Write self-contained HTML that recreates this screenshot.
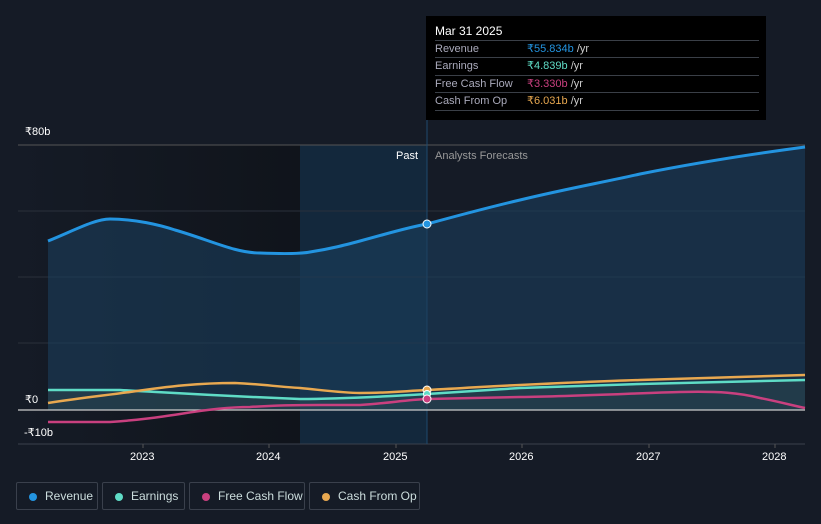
<!DOCTYPE html>
<html><head><meta charset="utf-8"><style>
body{margin:0;width:821px;height:524px;background:#151b26;font-family:"Liberation Sans",sans-serif;overflow:hidden;position:relative}
.tt{position:absolute;left:426px;top:16px;width:340px;height:104px;background:#000;color:#fff;font-size:11px}
.tt .h{position:absolute;left:9px;top:8px;font-size:12px}
.tt .r{position:absolute;left:9px;width:324px;border-top:1px solid #3a3f47;height:17px;line-height:17px;color:#aab}
.tt .r span{position:absolute;left:92px}
.tt .r i{font-style:normal;color:#ccc}
.lg{position:absolute;top:482px;height:28px;border:1px solid #3a404c;border-radius:2px;color:#cdd;font-size:12px;line-height:28px;box-sizing:border-box}
.lg b{position:absolute;left:12px;top:10px;width:8px;height:8px;border-radius:50%}
.lg span{position:absolute;left:28px;top:-1px}
.ax{position:absolute;color:#fff;font-size:11px}
</style></head><body>
<svg width="821" height="524" style="position:absolute;left:0;top:0">
<defs><linearGradient id="pf" x1="0" x2="1"><stop offset="0" stop-color="#151b26"/><stop offset="1" stop-color="#10141b"/></linearGradient></defs>
<rect x="18" y="145" width="282" height="299" fill="url(#pf)"/>
<rect x="300" y="145" width="127" height="299" fill="#13283c"/>
<g stroke="#2a303b" stroke-width="1"><line x1="18" y1="145" x2="805" y2="145" stroke="#555"/><line x1="18" y1="211" x2="805" y2="211"/><line x1="18" y1="277" x2="805" y2="277"/><line x1="18" y1="343" x2="805" y2="343"/><line x1="18" y1="444" x2="805" y2="444" stroke="#3a404c"/></g>
<line x1="427" y1="120" x2="427" y2="444" stroke="#1e4a6e" stroke-width="1"/>
<path d="M48,241 C75,230 95,219 110,219 C135,219 160,225 175,230 C210,240 235,253 260,253 C285,254 300,254 310,252 C330,249 345,245 360,241 C390,233 405,228 427,224 C460,215 490,207 520,200 C570,188 600,183 640,174 C700,162 760,153 805,147 L805,410 L48,410Z" fill="#1b3d5c" opacity="0.6"/>
<path d="M48,390 L120,390 C160,392 200,395 300,399 C330,399 360,398 427,394 C470,391 490,390 520,388 L640,384 L805,380 L805,410 L48,410Z" fill="#3a5a55" opacity="0.3"/>
<path d="M48,241 C75,230 95,219 110,219 C135,219 160,225 175,230 C210,240 235,253 260,253 C285,254 300,254 310,252 C330,249 345,245 360,241 C390,233 405,228 427,224 C460,215 490,207 520,200 C570,188 600,183 640,174 C700,162 760,153 805,147" fill="none" stroke="#2394e0" stroke-width="3"/>
<line x1="18" y1="410" x2="805" y2="410" stroke="#ccc" stroke-width="1.2"/>
<path d="M48,422 L110,422 C140,420 160,417 180,414 C210,409 230,407 250,407 C280,405 300,405 320,405 L360,405 C390,403 405,400 427,399 L520,397 C580,396 640,393 680,392 C720,391 740,393 760,398 C780,402 795,406 805,408" fill="none" stroke="#c9407f" stroke-width="2.5"/>
<path d="M48,390 L120,390 C160,392 200,395 300,399 C330,399 360,398 427,394 C470,391 490,390 520,388 L640,384 L805,380" fill="none" stroke="#5fdcc6" stroke-width="2.5"/>
<path d="M48,403 C80,398 100,396 130,392 C170,386 200,383 235,383 C260,384 280,387 300,388 C330,391 345,393 360,393 C390,393 405,391 427,390 C470,388 490,386 520,385 C580,382 600,381 640,380 C700,378 760,376 805,375" fill="none" stroke="#e8a850" stroke-width="2.5"/>
<circle cx="427" cy="224" r="4" fill="#2394e0" stroke="#fff" stroke-width="1"/>
<circle cx="427" cy="390" r="4" fill="#e8a850" stroke="#fff" stroke-width="1"/>
<circle cx="427" cy="394" r="3.5" fill="#5fdcc6" stroke="#fff" stroke-width="1"/>
<circle cx="427" cy="399" r="4" fill="#c9407f" stroke="#fff" stroke-width="1"/>
<g stroke="#555"><line x1="143" y1="444" x2="143" y2="448"/><line x1="269" y1="444" x2="269" y2="448"/><line x1="396" y1="444" x2="396" y2="448"/><line x1="522" y1="444" x2="522" y2="448"/><line x1="649" y1="444" x2="649" y2="448"/><line x1="775" y1="444" x2="775" y2="448"/></g>
</svg>
<div class="ax" style="left:25px;top:125px">₹80b</div>
<div class="ax" style="left:25px;top:393px">₹0</div>
<div class="ax" style="left:24px;top:426px">-₹10b</div>
<div class="ax" style="left:130px;top:451px">2023</div>
<div class="ax" style="left:256px;top:451px">2024</div>
<div class="ax" style="left:383px;top:451px">2025</div>
<div class="ax" style="left:509px;top:451px">2026</div>
<div class="ax" style="left:636px;top:451px">2027</div>
<div class="ax" style="left:762px;top:451px">2028</div>
<div class="ax" style="left:396px;top:150px">Past</div>
<div class="ax" style="left:435px;top:150px;color:#999">Analysts Forecasts</div>
<div class="tt"><div class="h">Mar 31 2025</div>
<div class="r" style="top:24px">Revenue<span style="color:#2394e0">₹55.834b <i>/yr</i></span></div>
<div class="r" style="top:41px">Earnings<span style="color:#5fdcc6">₹4.839b <i>/yr</i></span></div>
<div class="r" style="top:59px">Free Cash Flow<span style="color:#c9407f">₹3.330b <i>/yr</i></span></div>
<div class="r" style="top:76px">Cash From Op<span style="color:#e8a850">₹6.031b <i>/yr</i></span></div>
<div class="r" style="top:94px;height:0"></div>
</div>
<div class="lg" style="left:16px;width:82px"><b style="background:#2394e0"></b><span>Revenue</span></div>
<div class="lg" style="left:102px;width:83px"><b style="background:#5fdcc6"></b><span>Earnings</span></div>
<div class="lg" style="left:189px;width:116px"><b style="background:#c9407f"></b><span>Free Cash Flow</span></div>
<div class="lg" style="left:309px;width:111px"><b style="background:#e8a850"></b><span>Cash From Op</span></div>
</body></html>
